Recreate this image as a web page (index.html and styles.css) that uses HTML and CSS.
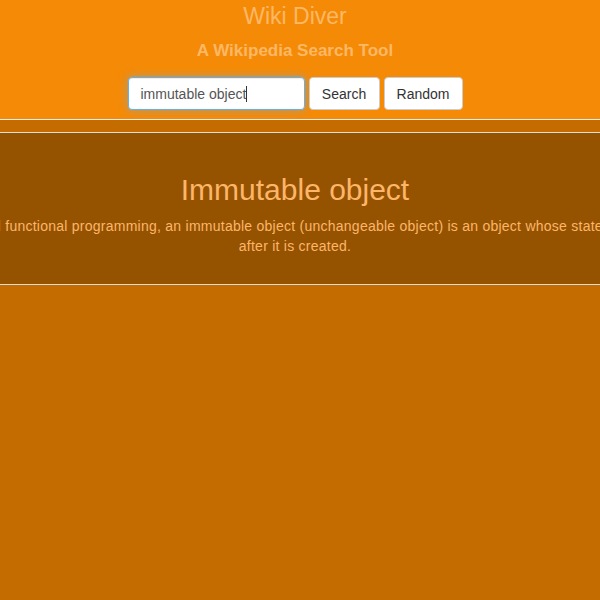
FILE: index.html
```html
<!DOCTYPE html>
<html>
<head>
<meta charset="utf-8">
<link rel="stylesheet" href="styles.css">
</head>
<body>
<header class="header">
  <h1 class="title">Wiki Diver</h1>
  <h2 class="subtitle">A Wikipedia Search Tool</h2>
  <form class="search">
    <div class="input">immutable object<span class="caret"></span></div>
    <button type="button" class="btn">Search</button>
    <button type="button" class="btn">Random</button>
  </form>
</header>
<div class="gap"></div>
<section class="results">
  <div class="result">
    <h3 class="result-title">Immutable object</h3>
    <p class="result-text">In object-oriented and functional programming, an immutable object (unchangeable object) is an object whose state cannot be modified after it is created.</p>
  </div>
</section>
</body>
</html>
```
FILE: styles.css
```css
html, body {
  margin: 0;
  padding: 0;
  overflow: hidden;
}
body {
  background: #c46c00;
  font-family: "Liberation Sans", Arial, sans-serif;
  font-size: 14px;
  line-height: 20px;
  width: 600px;
  height: 600px;
}
.header {
  background: #f58a06;
  height: 119px;
  padding-right: 10px;
  border-bottom: 1px solid #eeeeee;
  display: flex;
  flex-direction: column;
  align-items: center;
}
.title {
  margin: 3px 0 0;
  font-size: 23px;
  line-height: 26px;
  font-weight: normal;
  color: #fcb865;
}
.subtitle {
  margin: 12px 0 0;
  font-size: 17px;
  line-height: 20px;
  font-weight: bold;
  color: #fcb865;
}
.search {
  margin-top: 16px;
  display: flex;
  gap: 4px;
}
.input {
  box-sizing: border-box;
  width: 177px;
  height: 33px;
  padding: 6px 12px;
  background: #fff;
  border: 1px solid #66afe9;
  border-radius: 4px;
  box-shadow: inset 0 1px 1px rgba(0,0,0,.075), 0 0 8px rgba(102,175,233,.6);
  color: #555;
  font-size: 14px;
  line-height: 20px;
  display: flex;
  align-items: center;
}
.caret {
  display: inline-block;
  width: 1px;
  height: 16px;
  background: #333;
}
.btn {
  box-sizing: border-box;
  height: 33px;
  padding: 6px 12px;
  background: #fff;
  border: 1px solid #ccc;
  border-radius: 4px;
  color: #333;
  font-family: "Liberation Sans", Arial, sans-serif;
  font-size: 14px;
  line-height: 20px;
}
.btn:first-of-type { width: 71px; }
.btn:last-of-type { width: 79px; }
.gap {
  height: 12px;
}
.results {
  border-top: 1px solid #dddddd;
  border-bottom: 1px solid #dddddd;
  background: #955300;
  height: 151px;
  padding-right: 10px;
  display: flex;
  justify-content: center;
}
.result {
  flex: none;
  width: 900px;
  text-align: center;
  color: #fdb56a;
}
.result-title {
  margin: 39px 0 0;
  font-size: 30px;
  line-height: 36px;
  font-weight: normal;
}
.result-text {
  margin: 8px 0 0;
  font-size: 14px;
  line-height: 20px;
  letter-spacing: 0.25px;
}
```
